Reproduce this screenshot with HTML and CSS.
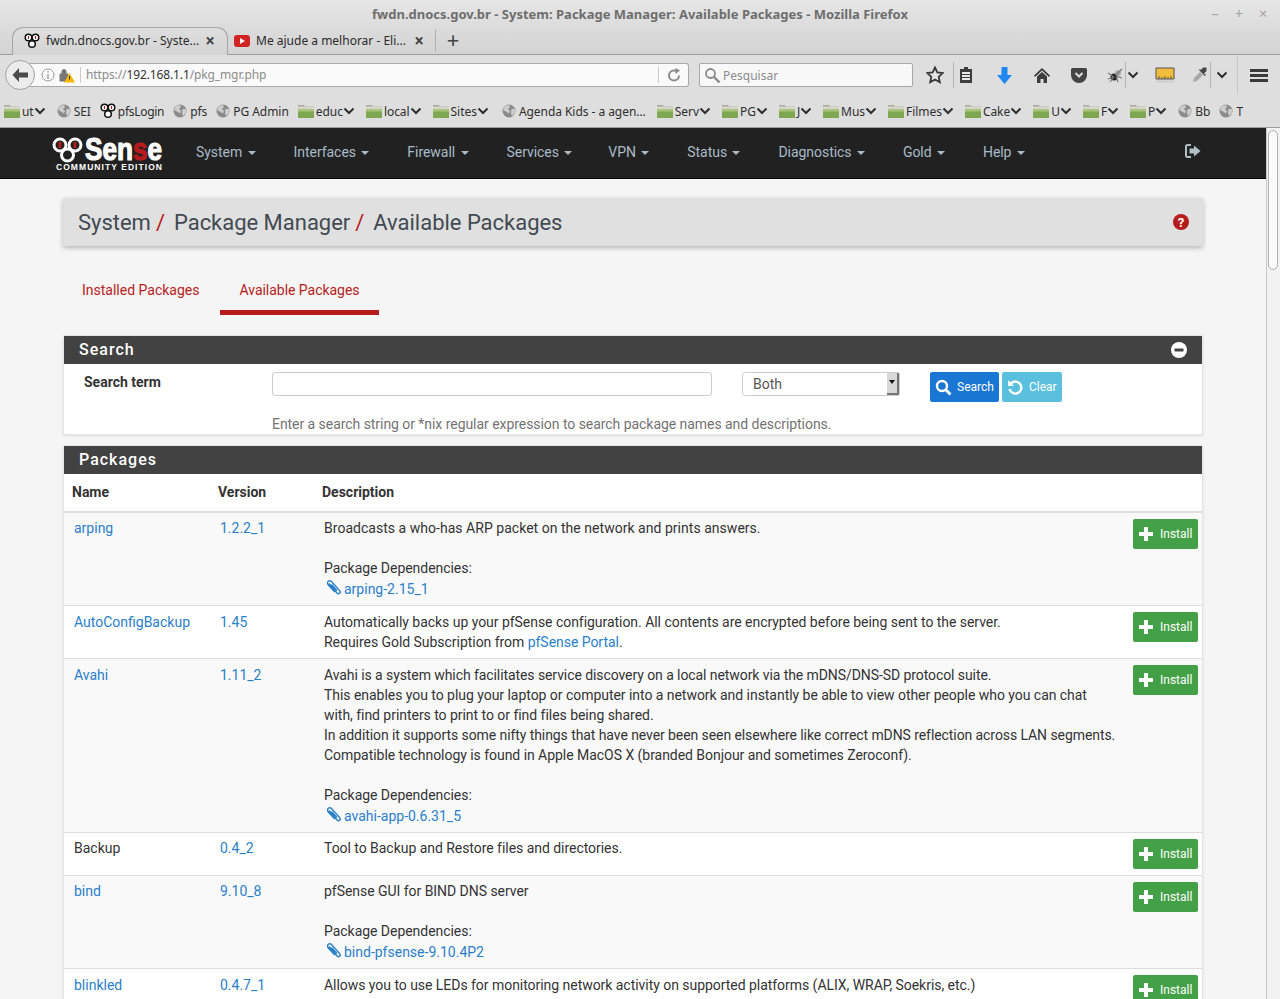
FILE: index.html
```html
<!DOCTYPE html>
<html lang="en">
<head>
    <meta charset="UTF-8">
    <title>fwdn.dnocs.gov.br - System: Package Manager: Available Packages</title>
    <link rel="stylesheet" href="styles.css">
</head>
<body>
    <!-- shared icons -->
    <svg class="sprites" aria-hidden="true">
        <symbol id="i-folder" viewBox="0 0 16 14">
            <path d="M0 1h6l1 1.500h9V5H0z" fill="#a9a99c"/>
            <path d="M0 2.500h16V14H0z" fill="#d6d6cc"/>
            <path d="M0 5h16v9H0z" fill="#7fa650"/>
            <path d="M0 5h16v2.500H0z" fill="#a9c47c"/>
        </symbol>
        <symbol id="i-globe" viewBox="0 0 14 14">
            <circle cx="7" cy="7" r="6.500" fill="#8b8b8b"/>
            <path d="M3 2 7 1l1 2-2 2 2 2-1 2.500-3-2-3-1.500zM9.500 5H13v4l-3 3-1-3z" fill="#cdcdcd"/>
        </symbol>
        <symbol id="i-chev" viewBox="0 0 12 8">
            <path d="M1.500 1.500 6 6l4.500-4.500" fill="none" stroke="#2e2e2e" stroke-width="2"/>
        </symbol>
        <symbol id="i-pf" viewBox="0 0 16 16">
            <circle cx="4.500" cy="4.500" r="3.300" fill="#fff" stroke="#111" stroke-width="1.500"/>
            <circle cx="11.500" cy="4.500" r="3.300" fill="#fff" stroke="#111" stroke-width="1.500"/>
            <circle cx="8" cy="11" r="3.300" fill="#fff" stroke="#111" stroke-width="1.500"/>
            <path d="M4 3h1v3H4zM11 3h1v3h-1z" fill="#b71c1c"/>
        </symbol>
        <symbol id="i-clip" viewBox="0 0 16 16">
            <path d="M5.500 5.500 11 11.500M3 4.500 11 14c1.800 1.800 4.200-.6 2.700-2.400L5.500 2.500C4 1 1.500 2 1.500 4c0 .8.300 1.500.8 2l6.500 7" fill="none" stroke="#2a7fc9" stroke-width="1.400"/>
        </symbol>
        <symbol id="i-plus" viewBox="0 0 14 14">
            <path d="M5 0h4v5h5v4H9v5H5V9H0V5h5z" fill="#fff"/>
        </symbol>
    </svg>

    <div class="window">
        <div class="title-bar">
            <span class="title-text">fwdn.dnocs.gov.br - System: Package Manager: Available Packages - Mozilla Firefox</span>
            <div class="win-controls"><span>–</span><span>+</span><span>×</span></div>
        </div>

        <div class="tab-row">
            <div class="tab tab-active">
                <svg class="tab-fav"><use href="#i-pf"/></svg>
                <span class="tab-label">fwdn.dnocs.gov.br - Syste...</span>
                <span class="tab-close">×</span>
            </div>
            <div class="tab tab-other">
                <svg class="tab-fav" viewBox="0 0 16 16"><rect y="2" width="16" height="12" rx="3" fill="#d32222"/><path d="M6 5l5 3-5 3z" fill="#fff"/></svg>
                <span class="tab-label">Me ajude a melhorar - Eli...</span>
                <span class="tab-close">×</span>
            </div>
            <span class="tab-new">+</span>
        </div>

        <div class="nav-row">
            <div class="back-btn">
                <svg width="18" height="16" viewBox="0 0 18 16"><path d="M8 1 1.500 8 8 15v-4.500h9v-5H8z" fill="#4a4a4a"/></svg>
            </div>
            <div class="url-bar">
                <svg class="url-info" width="14" height="14" viewBox="0 0 14 14"><circle cx="7" cy="7" r="6" fill="none" stroke="#999"/><path d="M6.300 3h1.400v1.500H6.300zM6.300 6h1.400v5H6.300z" fill="#999"/></svg>
                <svg class="url-lock" width="16" height="15" viewBox="0 0 16 15"><path d="M1 6h8v7H1zM3 6V3.500a2 2 0 0 1 4 0V6" fill="#777" stroke="#777"/><path d="M10.500 5 16 14.500H5z" fill="#f5b800"/><path d="M10 8h1v3.500h-1z" fill="#333"/></svg>
                <span class="url-text">https://<b>192.168.1.1</b>/pkg_mgr.php</span>
                <span class="url-reload">
                    <svg width="14" height="14" viewBox="0 0 14 14"><path d="M12 7.500A5 5 0 1 1 7 2.500h3" fill="none" stroke="#8a8a8a" stroke-width="2"/><path d="M8.500 0l4.500 2.500L8.500 6z" fill="#8a8a8a"/></svg>
                </span>
            </div>
            <div class="search-bar">
                <svg width="17" height="17" viewBox="0 0 17 17"><circle cx="6.500" cy="6.500" r="4.500" fill="none" stroke="#8a8a8a" stroke-width="1.800"/><path d="M10 10l5.500 5.500" stroke="#8a8a8a" stroke-width="2.400"/></svg>
                <span>Pesquisar</span>
            </div>
            <div class="tools">
                <span class="tool w38 sep-right">
                    <svg width="18" height="18" viewBox="0 0 18 18"><path d="M9 1.500l2.300 5 5.400.6-4 3.700 1.100 5.400L9 13.500l-4.800 2.700 1.100-5.400-4-3.700 5.400-.6z" fill="#e4e4e4" stroke="#3a3a3a" stroke-width="1.800"/></svg>
                </span>
                <span class="tool w24">
                    <svg width="14" height="16" viewBox="0 0 14 16"><path d="M5 0h4v2h4v14H1V2h4z" fill="#3d3d3d"/><path d="M3 5h8v2H3zM3 8h8v2H3zM3 11h8v2H3z" fill="#e8e8e8"/></svg>
                </span>
                <span class="tool w52">
                    <svg width="15" height="17" viewBox="0 0 15 17"><path d="M4.500 0h6v8h4.500L7.500 17 0 8h4.500z" fill="#1e88f0"/></svg>
                </span>
                <span class="tool w24">
                    <svg width="16" height="16" viewBox="0 0 16 16"><path d="M8 1 0 8.500 1 10l7-6.500 7 6.500 1-1.500z" fill="#3d3d3d"/><path d="M3 9.500 8 5l5 4.500V16H9.500v-4h-3v4H3z" fill="#3d3d3d"/></svg>
                </span>
                <span class="tool w50">
                    <svg width="16" height="15" viewBox="0 0 16 15"><path d="M1.500 0h13A1.500 1.500 0 0 1 16 1.500V7a8 8 0 0 1-16 0V1.500A1.500 1.500 0 0 1 1.500 0z" fill="#444"/><path d="M4.500 5 8 8.500 11.500 5" fill="none" stroke="#ddd" stroke-width="2"/></svg>
                </span>
                <span class="tool w22 sep-right">
                    <svg width="16" height="15" viewBox="0 0 16 15"><circle cx="7" cy="9" r="3.500" fill="#222"/><circle cx="11" cy="5" r="3" fill="#aaa"/><path d="M1 5l6 4M15 1 9 7M1 11l6-2M15 10 9 8M3 14l4-5M11 14 9 9" stroke="#777" stroke-width="1.200"/></svg>
                </span>
                <span class="tool w14"><svg class="chev"><use href="#i-chev"/></svg></span>
                <span class="tool w49">
                    <svg width="20" height="16" viewBox="0 0 20 16"><path d="M1 1h18v11H1z" fill="#f2bd3c" stroke="#555"/><path d="M4 9v3M7 10v2M10 9v3M13 10v2M16 9v3" stroke="#555"/><path d="M1 14.500h18" stroke="#ccc" stroke-width="2"/></svg>
                </span>
                <span class="tool w22 sep-right">
                    <svg width="16" height="16" viewBox="0 0 16 16"><path d="M1 15l1-4 6-6 3 3-6 6z" fill="#a8a8a8"/><path d="M9 3l2-2.500h3.500V4L12 6.500 14 8l-1 1-6-6 1-1z" fill="#444"/></svg>
                </span>
                <span class="tool w22"><svg class="chev"><use href="#i-chev"/></svg></span>
                <span class="tool w42 sep-left">
                    <svg width="18" height="13" viewBox="0 0 18 13"><path d="M0 0h18v3H0zM0 5h18v3H0zM0 10h18v3H0z" fill="#3a3a3a"/></svg>
                </span>
            </div>
        </div>

        <div class="bookmarks">
            <span class="bm bm-menu"><svg class="bm-f"><use href="#i-folder"/></svg>ut<svg class="chev"><use href="#i-chev"/></svg></span>
            <span class="bm"><svg class="bm-g"><use href="#i-globe"/></svg>SEI</span>
            <span class="bm bm-login"><svg class="bm-p"><use href="#i-pf"/></svg>pfsLogin</span>
            <span class="bm"><svg class="bm-g"><use href="#i-globe"/></svg>pfs</span>
            <span class="bm"><svg class="bm-g"><use href="#i-globe"/></svg>PG Admin</span>
            <span class="bm bm-menu"><svg class="bm-f"><use href="#i-folder"/></svg>educ<svg class="chev"><use href="#i-chev"/></svg></span>
            <span class="bm bm-menu"><svg class="bm-f"><use href="#i-folder"/></svg>local<svg class="chev"><use href="#i-chev"/></svg></span>
            <span class="bm bm-menu"><svg class="bm-f"><use href="#i-folder"/></svg>Sites<svg class="chev"><use href="#i-chev"/></svg></span>
            <span class="bm bm-agenda"><svg class="bm-g"><use href="#i-globe"/></svg>Agenda Kids - a agen...</span>
            <span class="bm bm-menu"><svg class="bm-f"><use href="#i-folder"/></svg>Serv<svg class="chev"><use href="#i-chev"/></svg></span>
            <span class="bm bm-menu"><svg class="bm-f"><use href="#i-folder"/></svg>PG<svg class="chev"><use href="#i-chev"/></svg></span>
            <span class="bm bm-menu"><svg class="bm-f"><use href="#i-folder"/></svg>J<svg class="chev"><use href="#i-chev"/></svg></span>
            <span class="bm bm-menu"><svg class="bm-f"><use href="#i-folder"/></svg>Mus<svg class="chev"><use href="#i-chev"/></svg></span>
            <span class="bm bm-menu"><svg class="bm-f"><use href="#i-folder"/></svg>Filmes<svg class="chev"><use href="#i-chev"/></svg></span>
            <span class="bm bm-menu"><svg class="bm-f"><use href="#i-folder"/></svg>Cake<svg class="chev"><use href="#i-chev"/></svg></span>
            <span class="bm bm-menu"><svg class="bm-f"><use href="#i-folder"/></svg>U<svg class="chev"><use href="#i-chev"/></svg></span>
            <span class="bm bm-menu"><svg class="bm-f"><use href="#i-folder"/></svg>F<svg class="chev"><use href="#i-chev"/></svg></span>
            <span class="bm bm-menu"><svg class="bm-f"><use href="#i-folder"/></svg>P<svg class="chev"><use href="#i-chev"/></svg></span>
            <span class="bm"><svg class="bm-g"><use href="#i-globe"/></svg>Bb</span>
            <span class="bm"><svg class="bm-g"><use href="#i-globe"/></svg>T</span>
        </div>

        <div class="viewport">
            <div class="page">
                <nav class="navbar">
                    <svg class="logo" width="112" height="44" viewBox="0 0 112 44">
                        <circle cx="8" cy="14" r="6" fill="none" stroke="#fff" stroke-width="3"/>
                        <circle cx="23" cy="14" r="6" fill="none" stroke="#fff" stroke-width="3"/>
                        <circle cx="15.500" cy="24" r="6" fill="none" stroke="#fff" stroke-width="3"/>
                        <path d="M6.500 11h3v6h-3zM21.500 11h3v6h-3z" fill="#b71c1c"/>
                        <text class="logo-word" x="33" y="29" textLength="77" lengthAdjust="spacingAndGlyphs">Sen<tspan class="logo-red">s</tspan>e</text>
                        <text class="logo-sub" x="4" y="39" textLength="106" lengthAdjust="spacing">COMMUNITY EDITION</text>
                    </svg>
                    <ul class="nav-menu">
                        <li>System <i class="caret"></i></li>
                        <li>Interfaces <i class="caret"></i></li>
                        <li>Firewall <i class="caret"></i></li>
                        <li class="nav-services">Services <i class="caret"></i></li>
                        <li>VPN <i class="caret"></i></li>
                        <li>Status <i class="caret"></i></li>
                        <li>Diagnostics <i class="caret"></i></li>
                        <li>Gold <i class="caret"></i></li>
                        <li>Help <i class="caret"></i></li>
                    </ul>
                    <svg class="logout" width="16" height="14" viewBox="0 0 16 14"><path d="M6 1H2.500A1.500 1.500 0 0 0 1 2.500v9A1.500 1.500 0 0 0 2.500 13H6" fill="none" stroke="#b0bec5" stroke-width="2"/><path d="M9 1.500 15.500 7 9 12.500V9.500H4.500v-5H9z" fill="#b0bec5"/></svg>
                </nav>

                <div class="container">
                    <div class="page-title">
                        <h1>System<span class="slash">/</span>Package Manager<span class="slash">/</span>Available Packages</h1>
                        <svg width="16" height="16" viewBox="0 0 16 16"><circle cx="8" cy="8" r="8" fill="#b71c1c"/><text class="help-mark" x="8" y="12.500" text-anchor="middle">?</text></svg>
                    </div>

                    <ul class="tabs">
                        <li>Installed Packages</li>
                        <li class="active">Available Packages</li>
                    </ul>

                    <section class="panel">
                        <div class="panel-head">
                            <span>Search</span>
                            <svg width="16" height="16" viewBox="0 0 16 16"><circle cx="8" cy="8" r="8" fill="#fff"/><path d="M3.500 6.500h9v3h-9z" fill="#424242"/></svg>
                        </div>
                        <div class="search-body">
                            <div class="search-row">
                                <label class="search-label">Search term</label>
                                <input type="text" class="search-input">
                                <div class="fake-select">Both<span class="select-arrow"></span></div>
                                <button class="btn btn-blue">
                                    <svg width="17" height="17" viewBox="0 0 17 17"><circle cx="7" cy="7" r="5" fill="none" stroke="#fff" stroke-width="2.400"/><path d="M10.500 10.500l5 5" stroke="#fff" stroke-width="2.800"/></svg>
                                    Search
                                </button>
                                <button class="btn btn-cyan">
                                    <svg width="17" height="17" viewBox="0 0 17 17"><path d="M3.500 5A6 6 0 1 1 2.500 10" fill="none" stroke="#fff" stroke-width="2.400"/><path d="M1 1v6h6z" fill="#fff"/></svg>
                                    Clear
                                </button>
                            </div>
                            <p class="search-help">Enter a search string or *nix regular expression to search package names and descriptions.</p>
                        </div>
                    </section>

                    <section class="panel">
                        <div class="panel-head"><span>Packages</span></div>
                        <table class="pkg-table">
                            <thead>
                                <tr><th class="c-name">Name</th><th class="c-ver">Version</th><th class="c-desc">Description</th><th class="c-act"></th></tr>
                            </thead>
                            <tbody>
                                <tr class="row-dep">
                                    <td><a>arping</a></td>
                                    <td><a>1.2.2_1</a></td>
                                    <td class="desc"><span class="wide">Broadcasts a who-has ARP packet on the network and prints answers.</span><br><br>Package Dependencies:<br><a class="dep"><svg class="clip"><use href="#i-clip"/></svg>arping-2.15_1</a></td>
                                    <td class="act"><button class="btn btn-green"><svg class="plus"><use href="#i-plus"/></svg>Install</button></td>
                                </tr>
                                <tr class="row-low">
                                    <td><a>AutoConfigBackup</a></td>
                                    <td><a>1.45</a></td>
                                    <td class="desc">Automatically backs up your pfSense configuration. All contents are encrypted before being sent to the server.<br>Requires Gold Subscription from <a>pfSense Portal</a>.</td>
                                    <td class="act"><button class="btn btn-green"><svg class="plus"><use href="#i-plus"/></svg>Install</button></td>
                                </tr>
                                <tr class="row-low">
                                    <td><a>Avahi</a></td>
                                    <td><a>1.11_2</a></td>
                                    <td class="desc"><span class="narrow">Avahi is a system which facilitates service discovery on a local network via the mDNS/DNS-SD protocol suite.</span><br>This enables you to plug your laptop or computer into a network and instantly be able to view other people who you can chat<br>with, find printers to print to or find files being shared.<br><span class="narrow">In addition it supports some nifty things that have never been seen elsewhere like correct mDNS reflection across LAN segments.</span><br>Compatible technology is found in Apple MacOS X (branded Bonjour and sometimes Zeroconf).<br><br>Package Dependencies:<br><a class="dep"><svg class="clip"><use href="#i-clip"/></svg>avahi-app-0.6.31_5</a></td>
                                    <td class="act"><button class="btn btn-green"><svg class="plus"><use href="#i-plus"/></svg>Install</button></td>
                                </tr>
                                <tr>
                                    <td>Backup</td>
                                    <td><a>0.4_2</a></td>
                                    <td class="desc">Tool to Backup and Restore files and directories.</td>
                                    <td class="act"><button class="btn btn-green"><svg class="plus"><use href="#i-plus"/></svg>Install</button></td>
                                </tr>
                                <tr class="row-dep">
                                    <td><a>bind</a></td>
                                    <td><a>9.10_8</a></td>
                                    <td class="desc">pfSense GUI for BIND DNS server<br><br>Package Dependencies:<br><a class="dep"><svg class="clip"><use href="#i-clip"/></svg>bind-pfsense-9.10.4P2</a></td>
                                    <td class="act"><button class="btn btn-green"><svg class="plus"><use href="#i-plus"/></svg>Install</button></td>
                                </tr>
                                <tr class="row-low">
                                    <td><a>blinkled</a></td>
                                    <td><a>0.4.7_1</a></td>
                                    <td class="desc">Allows you to use LEDs for monitoring network activity on supported platforms (ALIX, WRAP, Soekris, etc.)</td>
                                    <td class="act"><button class="btn btn-green"><svg class="plus"><use href="#i-plus"/></svg>Install</button></td>
                                </tr>
                            </tbody>
                        </table>
                    </section>
                </div>
            </div>
            <div class="scrollbar"><div class="scroll-thumb"></div></div>
        </div>
    </div>
</body>
</html>
```

FILE: styles.css
```css
html, body {
    height: 100%;
    margin: 0;
    overflow: hidden;
}
.sprites {
    display: none;
}
.window {
    display: flex;
    flex-direction: column;
    height: 100vh;
    font-family: "Noto Sans", sans-serif;
    background: #dedede;
}

/* firefox chrome */
.title-bar {
    height: 27px;
    flex: none;
    display: flex;
    align-items: center;
    justify-content: center;
    position: relative;
    background: linear-gradient(#e6e6e6, #dcdcdc);
}
.title-text {
    font-size: 13px;
    font-weight: bold;
    color: #6e6e6e;
}
.win-controls {
    position: absolute;
    right: 11px;
    top: 3px;
    display: flex;
    gap: 12px;
    font-size: 15px;
    color: #a5a5a5;
}
.win-controls span {
    width: 12px;
    text-align: center;
}
.tab-row {
    height: 28px;
    flex: none;
    display: flex;
    align-items: stretch;
    padding-left: 12px;
    box-sizing: border-box;
    background: linear-gradient(#dcdcdc, #d3d3d3);
    border-bottom: 1px solid #9a9a9a;
}
.tab {
    display: flex;
    align-items: center;
    box-sizing: border-box;
    font-size: 12px;
    color: #2b2b2b;
    padding-bottom: 2px;
}
.tab-active {
    width: 216px;
    height: 28px;
    padding: 0 12px 2px 11px;
    border: 1px solid #a5a5a5;
    border-bottom: none;
    border-radius: 11px 11px 0 0;
    background: linear-gradient(#dedede, #d4d4d4);
}
.tab-other {
    width: 208px;
    padding: 0 11px 0 6px;
    border-right: 1px solid #b0b0b0;
    margin: 2px 0;
}
.tab-fav {
    width: 16px;
    height: 16px;
    flex: none;
    margin-right: 6px;
}
.tab-label {
    flex: 1;
    white-space: nowrap;
}
.tab-close {
    font-size: 17px;
    font-weight: bold;
    color: #444;
}
.tab-new {
    width: 34px;
    text-align: center;
    font-size: 22px;
    line-height: 24px;
    color: #444;
}
.nav-row {
    height: 40px;
    flex: none;
    display: flex;
    align-items: center;
    box-sizing: border-box;
    padding-left: 5px;
    background: #dedede;
}
.back-btn {
    width: 30px;
    height: 30px;
    flex: none;
    box-sizing: border-box;
    border: 1px solid #a0a0a0;
    border-radius: 50%;
    background: #ececec;
    display: flex;
    align-items: center;
    justify-content: center;
    position: relative;
    z-index: 1;
}
.url-bar {
    width: 659px;
    height: 24px;
    margin-left: -5px;
    flex: none;
    box-sizing: border-box;
    border: 1px solid #a8a8a8;
    border-left: none;
    border-radius: 0 3px 3px 0;
    background: #fafafa;
    display: flex;
    align-items: center;
    font-size: 12px;
    color: #8c8c8c;
}
.url-info {
    margin-left: 11px;
}
.url-lock {
    margin-left: 4px;
}
.url-text {
    flex: 1;
    margin-left: 5px;
    padding-left: 5px;
    border-left: 1px solid #ccc;
    line-height: 16px;
    letter-spacing: -0.12px;
}
.url-text b {
    font-weight: normal;
    color: #333;
}
.url-reload {
    width: 29px;
    height: 16px;
    border-left: 1px solid #ccc;
    display: flex;
    align-items: center;
    justify-content: center;
}
.search-bar {
    width: 214px;
    height: 24px;
    margin-left: 10px;
    flex: none;
    box-sizing: border-box;
    border: 1px solid #a8a8a8;
    border-radius: 2px;
    background: #f8f8f8;
    display: flex;
    align-items: center;
    gap: 2px;
    padding-left: 4px;
    font-size: 12px;
    color: #8c8c8c;
}
.tools {
    display: flex;
    align-items: center;
    margin-left: 3px;
    height: 30px;
}
.tool {
    display: flex;
    align-items: center;
    justify-content: center;
    height: 26px;
    box-sizing: border-box;
}
.w14 { width: 14px; }
.w22 { width: 22px; }
.w24 { width: 24px; }
.w38 { width: 38px; }
.w42 { width: 42px; }
.w49 { width: 49px; }
.w50 { width: 50px; }
.w52 { width: 52px; }
.sep-right {
    border-right: 1px solid #b5b5b5;
}
.sep-left {
    border-left: 1px solid #c5c5c5;
    height: 38px;
    margin-left: 4px;
}
.chev {
    width: 12px;
    height: 8px;
    flex: none;
}
.bookmarks {
    height: 32px;
    flex: none;
    display: flex;
    align-items: center;
    gap: 9px;
    padding-left: 4px;
    box-sizing: border-box;
    background: #dedede;
    font-size: 12px;
    letter-spacing: -0.05px;
    color: #2e2e2e;
    white-space: nowrap;
}
.bm {
    display: flex;
    align-items: center;
}
.bm-menu {
    margin-right: 2px;
}
.bm-login {
    letter-spacing: -0.3px;
}
.bm-agenda {
    margin: 0 2px;
}
.bm-f {
    width: 16px;
    height: 14px;
    margin-right: 2px;
}
.bm-g {
    width: 14px;
    height: 14px;
    margin-right: 3px;
}
.bm-p {
    width: 16px;
    height: 16px;
    margin-right: 2px;
}

/* page */
.viewport {
    flex: 1;
    display: flex;
    min-height: 0;
    border-top: 1px solid #9c9c9c;
}
.page {
    flex: 1;
    overflow: hidden;
    background: #f5f5f5;
    font-family: Roboto, sans-serif;
    font-size: 14px;
    line-height: 20px;
    color: #333;
}
.scrollbar {
    width: 14px;
    flex: none;
    padding: 2px 0 0 1px;
    box-sizing: border-box;
    background: #f2f2f2;
    border-left: 1px solid #c8c8c8;
}
.scroll-thumb {
    width: 10px;
    height: 140px;
    background: #fbfbfb;
    border: 1px solid #b0b0b0;
    border-radius: 6px;
    box-sizing: border-box;
}
.navbar {
    height: 50px;
    display: flex;
    align-items: center;
    background: #212121;
    border-bottom: 1px solid #000;
}
.logo {
    margin-left: 52px;
    flex: none;
}
.logo-word {
    font-family: "Liberation Sans", sans-serif;
    font-weight: bold;
    font-size: 32px;
    fill: #fff;
    stroke: #fff;
    stroke-width: 1.2px;
}
.logo-red {
    fill: #b71c1c;
    stroke: #b71c1c;
}
.logo-sub {
    font-family: "Liberation Sans", sans-serif;
    font-weight: bold;
    font-size: 8.500px;
    fill: #fff;
}
.nav-menu {
    display: flex;
    list-style: none;
    margin: 0 0 3px 13px;
    padding: 0;
    flex: 1;
    color: #a9bac8;
    letter-spacing: -0.05px;
}
.nav-menu li {
    padding: 0 19px;
}
.nav-menu .nav-services {
    padding-right: 17px;
}
.caret {
    display: inline-block;
    width: 0;
    height: 0;
    margin-left: 2px;
    vertical-align: middle;
    border-top: 4px solid #a9bac8;
    border-left: 4px solid transparent;
    border-right: 4px solid transparent;
}
.logout {
    margin: 0 65px 4px 0;
}
.container {
    margin: 0 63px;
}
.page-title {
    margin-top: 19px;
    height: 48px;
    display: flex;
    align-items: center;
    justify-content: space-between;
    padding: 0 14px 0 15px;
    background: #e0e0e0;
    border-radius: 2px;
    box-shadow: 0 2px 5px rgba(0, 0, 0, 0.26);
}
.page-title h1 {
    margin: 0;
    padding-top: 1px;
    font-size: 22px;
    font-weight: normal;
    letter-spacing: -0.02px;
    color: #424a52;
}
.slash {
    color: #b71c1c;
    margin: 0 9px 0 5px;
}
.help-mark {
    font-family: Roboto, sans-serif;
    font-size: 13px;
    font-weight: bold;
    fill: #fff;
}
.tabs {
    display: flex;
    list-style: none;
    margin: 19px 0 0 0;
    padding: 0;
    height: 50px;
    color: #b71c1c;
}
.tabs li {
    padding: 15px 19px 0;
    box-sizing: border-box;
}
.tabs .active {
    margin-left: 2px;
    letter-spacing: -0.03px;
    border-bottom: 5px solid #b71c1c;
}
.panel {
    margin: 20px 0 10px;
    background: #fff;
    border: 1px solid #e4e4e4;
    border-radius: 2px;
    box-shadow: 0 1px 3px rgba(0, 0, 0, 0.1);
}
.panel-head {
    height: 28px;
    display: flex;
    align-items: center;
    justify-content: space-between;
    padding: 0 15px 0 15px;
    background: #424242;
    color: #fff;
    font-size: 16px;
    font-weight: 500;
    letter-spacing: 1px;
    margin-bottom: 1px;
}
.panel + .panel {
    margin-top: 0;
}
.search-body {
    padding: 7px 0 0 20px;
}
.search-row {
    display: flex;
    align-items: flex-start;
}
.search-label {
    width: 188px;
    font-weight: bold;
    flex: none;
}
.search-input {
    width: 440px;
    height: 24px;
    box-sizing: border-box;
    border: 1px solid #ccc;
    border-radius: 3px;
    background: #fff;
    padding: 0;
}
.fake-select {
    width: 158px;
    height: 24px;
    margin: 0 30px;
    box-sizing: border-box;
    border: 1px solid #ccc;
    border-radius: 3px;
    padding-left: 10px;
    line-height: 22px;
    color: #555;
    position: relative;
}
.select-arrow {
    position: absolute;
    right: 0;
    top: 0;
    bottom: 0;
    width: 12px;
    background: #d8d8d8;
    border-right: 2px solid #777;
    border-bottom: 2px solid #777;
    box-sizing: border-box;
}
.select-arrow::after {
    content: "";
    position: absolute;
    left: 2px;
    top: 7px;
    border-top: 4px solid #111;
    border-left: 3px solid transparent;
    border-right: 3px solid transparent;
}
.btn {
    display: inline-flex;
    align-items: center;
    height: 30px;
    border: none;
    border-radius: 2px;
    font-family: Roboto, sans-serif;
    font-size: 12px;
    color: #fff;
    padding: 0 5px;
    box-sizing: border-box;
}
.btn svg {
    margin-right: 5px;
    flex: none;
}
.btn-blue {
    width: 69px;
    background: #1976d2;
}
.btn-cyan {
    width: 60px;
    margin-left: 3px;
    background: #5bc0de;
}
.btn-green {
    width: 65px;
    background: #43a047;
}
.btn .plus {
    width: 14px;
    height: 14px;
    margin: 0 7px 0 1px;
}
.search-help {
    margin: 12px 0 0 188px;
    color: #737373;
    letter-spacing: -0.05px;
}
.pkg-table {
    width: 100%;
    border-collapse: collapse;
    table-layout: fixed;
}
.pkg-table th {
    height: 37px;
    padding: 0 8px 2px;
    text-align: left;
    font-weight: bold;
    box-sizing: border-box;
    border-bottom: 2px solid #ddd;
}
.c-name { width: 146px; }
.c-ver { width: 104px; }
.c-act { width: 69px; }
.pkg-table td {
    padding: 5px 10px 7px;
    vertical-align: top;
    border-bottom: 1px solid #ddd;
    white-space: nowrap;
}
.pkg-table .row-dep td {
    padding: 5px 10px 6px;
}
.pkg-table .row-low td {
    padding: 6px 10px;
}
.pkg-table td.desc {
    letter-spacing: -0.04px;
}
.wide {
    letter-spacing: 0.03px;
}
.narrow {
    letter-spacing: -0.08px;
}
.pkg-table tbody tr:nth-child(odd) {
    background: #f9f9f9;
}
.pkg-table a {
    color: #2a7fc9;
}
.pkg-table tr td.act {
    padding: 6px 4px 6px 0;
    text-align: right;
}
.dep {
    display: inline-block;
    margin: 1px 0 -1px;
    letter-spacing: 0;
}
.clip {
    width: 16px;
    height: 16px;
    margin: 0 2px 0 2px;
    vertical-align: -1px;
}
```
